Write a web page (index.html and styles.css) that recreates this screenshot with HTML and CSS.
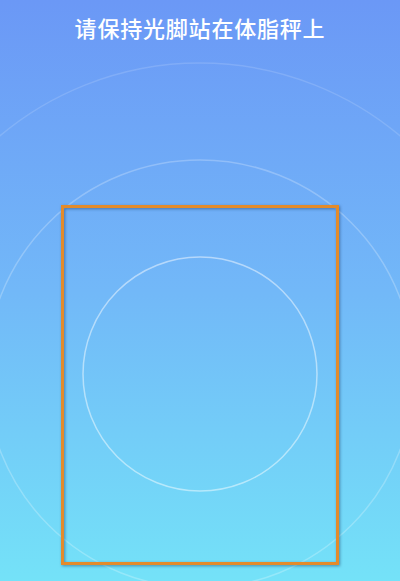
FILE: index.html
```html
<!DOCTYPE html>
<html lang="zh-CN">
<head>
<meta charset="utf-8">
<title>体脂秤</title>
<link rel="stylesheet" href="styles.css">
</head>
<body>
<div class="screen">
  <svg class="rings" width="400" height="581" viewBox="0 0 400 581" aria-hidden="true">
    <circle cx="200" cy="374" r="311" fill="none" stroke="rgba(255,255,255,0.14)" stroke-width="1.5"/>
    <circle cx="200" cy="374" r="214" fill="none" stroke="rgba(255,255,255,0.24)" stroke-width="1.5"/>
    <circle cx="200" cy="374" r="117" fill="none" stroke="rgba(255,255,255,0.48)" stroke-width="1.5"/>
  </svg>
  <h1 class="title">请保持光脚站在体脂秤上</h1>
  <div class="frame"></div>
</div>
</body>
</html>
```
FILE: styles.css
```css
html, body {
  margin: 0;
  padding: 0;
}
body {
  width: 400px;
  height: 581px;
  overflow: hidden;
}
.screen {
  position: relative;
  width: 400px;
  height: 581px;
  background: linear-gradient(180deg, #6b98f6 0%, #72b8f8 50%, #74e2f8 100%);
  display: flex;
  flex-direction: column;
  align-items: flex-start;
  overflow: hidden;
}
.rings {
  position: absolute;
  left: 0;
  top: 0;
}
.title {
  position: relative;
  align-self: stretch;
  margin: 0;
  padding-top: 12px;
  font-family: "Noto Sans CJK SC", "Noto Sans", sans-serif;
  font-weight: 500;
  font-size: 22px;
  line-height: 30px;
  letter-spacing: 0.8px;
  color: #ffffff;
  text-align: center;
}
.frame {
  position: relative;
  margin-top: 163px;
  margin-left: 61px;
  width: 272px;
  height: 354px;
  border: 3px solid #e38b2b;
  filter: drop-shadow(1.5px 1.5px 1.5px rgba(20, 50, 90, 0.5));
}
```
